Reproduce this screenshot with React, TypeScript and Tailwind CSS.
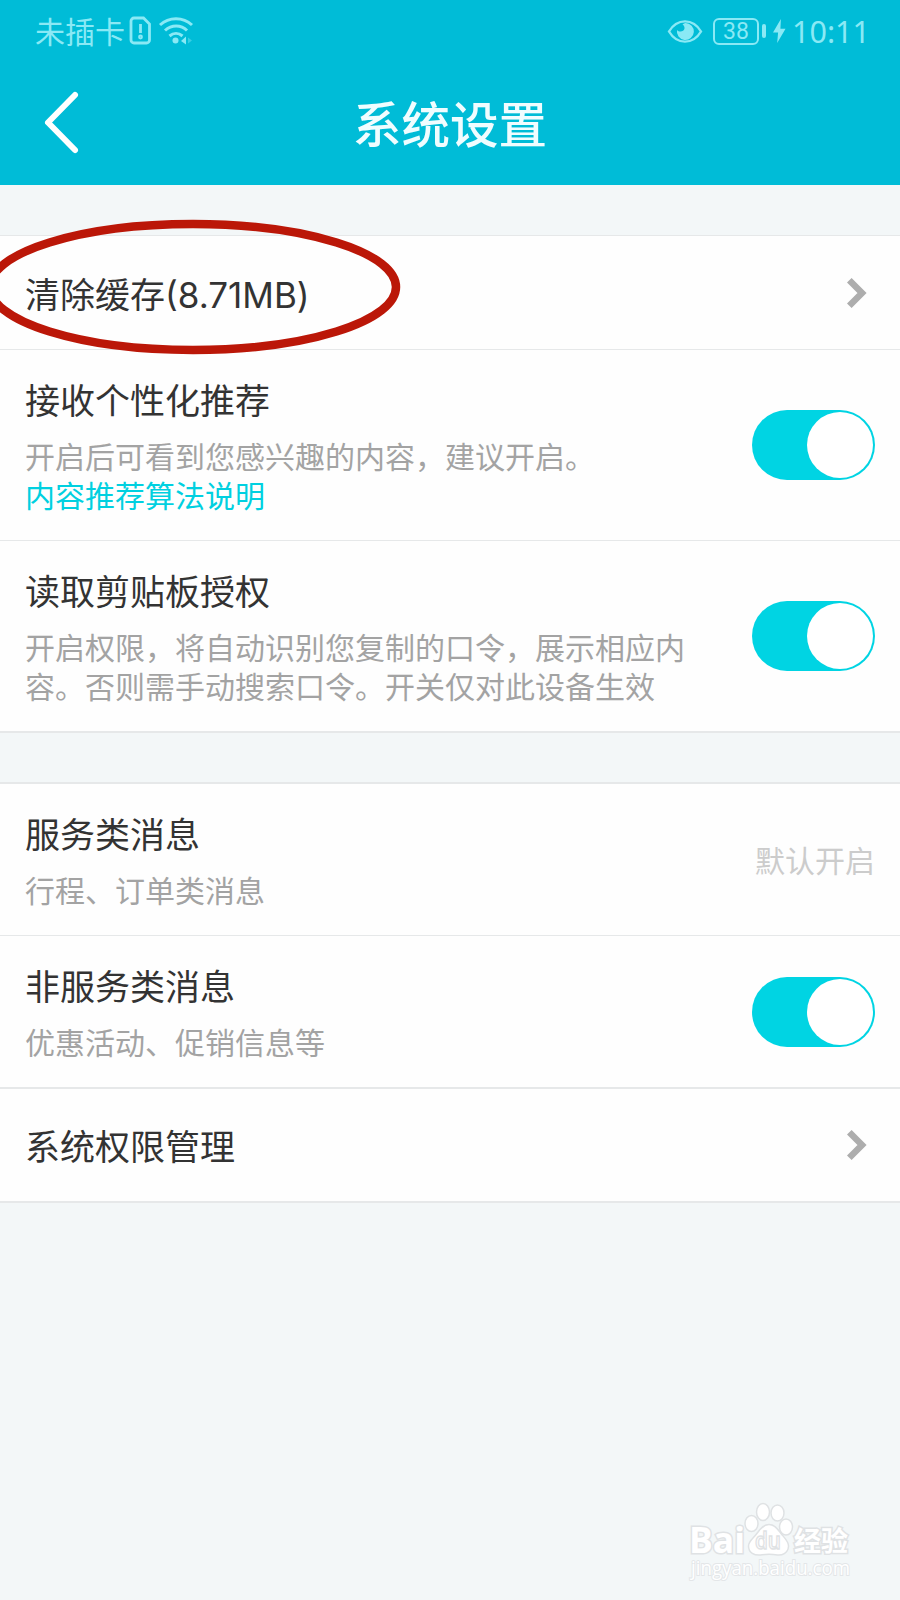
import type { ReactNode } from 'react';
import { clsx } from 'clsx';

type RowProps = {
  title: ReactNode;
  desc?: ReactNode;
  right: ReactNode;
  className: string;
};

function Row({ title, desc, right, className }: RowProps) {
  return (
    <div className={clsx('flex items-center justify-between border-[#e6e8e9] bg-[#fefefe] pl-[25px] pr-[25px]', className)}>
      <div className={desc && 'pb-[2px]'}>
        <div className="text-[35px] leading-[50px] text-[#333]">{title}</div>
        {desc && <div className="mt-[12px] text-[30px] leading-[39px] text-[#a3a3a3]">{desc}</div>}
      </div>
      {right}
    </div>
  );
}

function Toggle() {
  return (
    <div className="flex h-[70px] w-[123px] shrink-0 items-center justify-end rounded-full bg-[#00d4e3] p-[2px]">
      <div className="size-[66px] rounded-full bg-white" />
    </div>
  );
}

function Arrow() {
  return (
    <svg className="mr-[8px] h-[30px] w-[20px]" viewBox="0 0 20 30" fill="none">
      <path d="M2.3 2.3 15 15 2.3 27.7" stroke="#adadad" strokeWidth="6.5" />
    </svg>
  );
}

function StatusBar() {
  return (
    <div className="flex h-[62px] items-center justify-between pl-[35px] pr-[30px] text-[30px] text-[#8ae9f5]">
      <div className="flex items-center">
        <span className="-mt-[2px] leading-[60px]">未插卡</span>
        {/* SIM card missing */}
        <svg className="ml-[4px] h-[30px] w-[24px]" viewBox="0 0 24 30" fill="none" stroke="currentColor" strokeWidth="2.8">
          <path d="M5 2h9.5L20.500 8V24a3 3 0 0 1-3 3H5a3 3 0 0 1-3-3V5a3 3 0 0 1 3-3z" />
          <path d="M11.500 8v9" />
          <circle cx="11.500" cy="21" r="1" />
        </svg>
        {/* wifi */}
        <svg className="ml-[5px] h-[30px] w-[36px]" viewBox="0 0 36 30" fill="none" stroke="currentColor" strokeWidth="3">
          <path d="M2 9C11 .5 25 .5 34 9M7 14.500c6.500-6 16-6 22 0M11.500 20c4-3.500 9-3.500 13 0" />
          <circle cx="17.500" cy="24.500" r="3" fill="currentColor" stroke="none" />
          <path d="M28 20.500v8l-5-3.500z" fill="currentColor" stroke="none" />
          <path d="M30 21.500v6l4-3z" fill="currentColor" opacity="0.4" stroke="none" />
        </svg>
      </div>
      <div className="flex items-center">
        {/* eye comfort */}
        <svg className="h-[25px] w-[36px]" viewBox="0 0 36 25">
          <path d="M2 12.500C10-1 26-1 34 12.500 26 26 10 26 2 12.500z" fill="none" stroke="currentColor" strokeWidth="2.4" />
          <path d="M18.500 4a8.500 8.500 0 1 1-8.500 7c2 2.500 7 2 7.500-1.500.3-2-1-3.500-2-4 1-1 2-1.500 3-1.500z" fill="currentColor" />
        </svg>
        <div className="ml-[10px] flex h-[27px] w-[46px] items-center justify-center rounded-[6px] border-2 border-current font-['Roboto'] text-[23px] leading-none">38</div>
        <div className="ml-[3px] h-[14px] w-[4px] rounded-sm bg-current" />
        <svg className="ml-[7px] h-[26px] w-[13px]" viewBox="0 0 14 26" fill="currentColor">
          <path d="M8.500 0 0 14.500h5.500L4.500 26 13.500 10.500H8z" />
        </svg>
        <span className="ml-[6px] font-['Noto_Sans'] text-[30.5px] leading-[62px]">10:11</span>
      </div>
    </div>
  );
}

function Watermark() {
  return (
    <svg className="absolute top-[1495px] left-[680px]" width="180" height="90" viewBox="0 0 180 90" fill="#fff" stroke="#dfe2e4" strokeWidth="1.5" fontFamily="'Open Sans', 'Noto Sans CJK SC', sans-serif">
      <g fontWeight="700" paintOrder="stroke" strokeWidth="3">
        <text x="9" y="58" fontSize="36" textLength="56" lengthAdjust="spacingAndGlyphs">Bai</text>
        <text x="114" y="56" fontSize="27" textLength="54">经验</text>
      </g>
      <ellipse cx="71.5" cy="28.5" rx="6.5" ry="8" />
      <ellipse cx="83" cy="17" rx="6.5" ry="8.5" />
      <ellipse cx="97.5" cy="18" rx="6.5" ry="8" />
      <ellipse cx="106" cy="32" rx="6.5" ry="8" />
      <path d="M89 29.500c6 0 9 5 12 9s8 8 7.500 13c-.5 7-7 9-11 8.500-6-1-11-1-17 0-6 .5-12-2-12-9 0-5 5-8 8-12s6.500-9.500 12.500-9.500z" />
      <text x="75" y="54" fontSize="24" fontWeight="600" textLength="26" lengthAdjust="spacingAndGlyphs">du</text>
      <text x="11" y="80" fontSize="20" textLength="159" lengthAdjust="spacingAndGlyphs" stroke="#e3e6e8" paintOrder="stroke" strokeWidth="2">jingyan.baidu.com</text>
    </svg>
  );
}

export default function App() {
  return (
    <div className="relative h-[1600px] w-[900px] overflow-hidden bg-[#f3f7f8] font-['Noto_Sans_CJK_SC',sans-serif]">
      <header className="h-[185px] bg-[#00bcd7]">
        <StatusBar />
        <div className="relative flex h-[123px] items-center justify-center pb-[3px]">
          <svg className="absolute top-[28px] left-[42px]" width="40" height="66" viewBox="0 0 40 66" fill="none">
            <path d="M33 5 6 32.500l27 27.500" stroke="#fff" strokeWidth="6" strokeLinecap="round" strokeLinejoin="round" />
          </svg>
          <h1 className="text-[48.5px] leading-[70px] font-medium text-[#f0fdff]">系统设置</h1>
        </div>
      </header>

      <section className="mt-[50px] border-t border-[#e6e8e9]">
        <Row
          className="h-[114px] border-b"
          title={<div className="pt-[2px]">清除缓存<span className="font-['Inter'] text-[35px]">(8.71MB)</span></div>}
          right={<Arrow />}
        />
        <Row
          className="h-[191px] border-b"
          title="接收个性化推荐"
          desc={<>开启后可看到您感兴趣的内容，建议开启。<br /><span className="text-[#00d0e0]">内容推荐算法说明</span></>}
          right={<Toggle />}
        />
        <Row
          className="h-[192px] border-b-2"
          title="读取剪贴板授权"
          desc={<>开启权限，将自动识别您复制的口令，展示相应内<br />容。否则需手动搜索口令。开关仅对此设备生效</>}
          right={<Toggle />}
        />
      </section>

      <section className="mt-[49px] border-t-2 border-[#e6e8e9]">
        <Row
          className="h-[152px] border-b"
          title="服务类消息"
          desc="行程、订单类消息"
          right={<span className="text-[30px] text-[#ccc]">默认开启</span>}
        />
        <Row className="h-[153px] border-b-2" title="非服务类消息" desc="优惠活动、促销信息等" right={<Toggle />} />
        <Row className="h-[114px] border-b-2" title="系统权限管理" right={<Arrow />} />
      </section>

      {/* highlight around the cache row */}
      <svg className="absolute top-[210px] left-0" width="410" height="155" viewBox="0 0 410 155" fill="none">
        <ellipse cx="193" cy="77" rx="203" ry="63" stroke="#bb1708" strokeWidth="8.5" />
      </svg>
      <Watermark />
    </div>
  );
}
